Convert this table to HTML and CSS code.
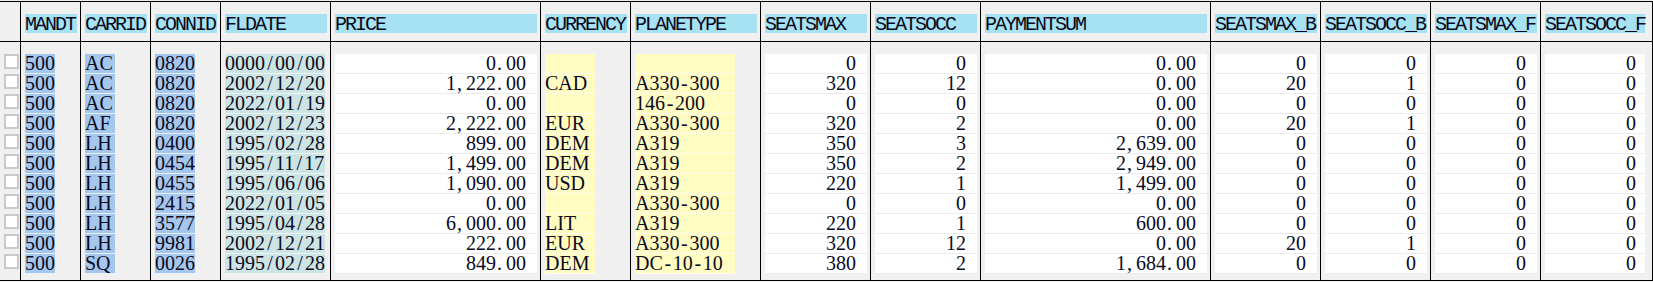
FILE: index.html
```html
<!DOCTYPE html>
<html>
<head>
<meta charset="utf-8">
<link rel="stylesheet" href="styles.css">
</head>
<body>
<div class="grid">
  <div class="col sel">
    <div class="hdr"></div>
    <div class="cells">
      <div class="chk"></div><div class="chk"></div><div class="chk"></div><div class="chk"></div><div class="chk"></div><div class="chk"></div><div class="chk"></div><div class="chk"></div><div class="chk"></div><div class="chk"></div><div class="chk"></div>
    </div>
  </div>
  <div class="col w60">
    <div class="hdr"><div class="label">MANDT</div></div>
    <div class="cells">
      <div class="v key c3">500</div><div class="v key c3">500</div><div class="v key c3">500</div><div class="v key c3">500</div><div class="v key c3">500</div><div class="v key c3">500</div><div class="v key c3">500</div><div class="v key c3">500</div><div class="v key c3">500</div><div class="v key c3">500</div><div class="v key c3">500</div>
    </div>
  </div>
  <div class="col w70">
    <div class="hdr"><div class="label">CARRID</div></div>
    <div class="cells">
      <div class="v key c3">AC</div><div class="v key c3">AC</div><div class="v key c3">AC</div><div class="v key c3">AF</div><div class="v key c3">LH</div><div class="v key c3">LH</div><div class="v key c3">LH</div><div class="v key c3">LH</div><div class="v key c3">LH</div><div class="v key c3">LH</div><div class="v key c3">SQ</div>
    </div>
  </div>
  <div class="col w70">
    <div class="hdr"><div class="label">CONNID</div></div>
    <div class="cells">
      <div class="v key c4">0820</div><div class="v key c4">0820</div><div class="v key c4">0820</div><div class="v key c4">0820</div><div class="v key c4">0400</div><div class="v key c4">0454</div><div class="v key c4">0455</div><div class="v key c4">2415</div><div class="v key c4">3577</div><div class="v key c4">9981</div><div class="v key c4">0026</div>
    </div>
  </div>
  <div class="col w110">
    <div class="hdr"><div class="label">FLDATE</div></div>
    <div class="cells">
      <div class="v date c10">0000<span class="s">/</span>00<span class="s">/</span>00</div>
      <div class="v date c10">2002<span class="s">/</span>12<span class="s">/</span>20</div>
      <div class="v date c10">2022<span class="s">/</span>01<span class="s">/</span>19</div>
      <div class="v date c10">2002<span class="s">/</span>12<span class="s">/</span>23</div>
      <div class="v date c10">1995<span class="s">/</span>02<span class="s">/</span>28</div>
      <div class="v date c10">1995<span class="s">/</span>11<span class="s">/</span>17</div>
      <div class="v date c10">1995<span class="s">/</span>06<span class="s">/</span>06</div>
      <div class="v date c10">2022<span class="s">/</span>01<span class="s">/</span>05</div>
      <div class="v date c10">1995<span class="s">/</span>04<span class="s">/</span>28</div>
      <div class="v date c10">2002<span class="s">/</span>12<span class="s">/</span>21</div>
      <div class="v date c10">1995<span class="s">/</span>02<span class="s">/</span>28</div>
    </div>
  </div>
  <div class="col w210">
    <div class="hdr"><div class="label">PRICE</div></div>
    <div class="cells">
      <div class="v num">0<span class="p">.</span>00</div>
      <div class="v num">1<span class="p">,</span>222<span class="p">.</span>00</div>
      <div class="v num">0<span class="p">.</span>00</div>
      <div class="v num">2<span class="p">,</span>222<span class="p">.</span>00</div>
      <div class="v num">899<span class="p">.</span>00</div>
      <div class="v num">1<span class="p">,</span>499<span class="p">.</span>00</div>
      <div class="v num">1<span class="p">,</span>090<span class="p">.</span>00</div>
      <div class="v num">0<span class="p">.</span>00</div>
      <div class="v num">6<span class="p">,</span>000<span class="p">.</span>00</div>
      <div class="v num">222<span class="p">.</span>00</div>
      <div class="v num">849<span class="p">.</span>00</div>
    </div>
  </div>
  <div class="col w90">
    <div class="hdr"><div class="label">CURRENCY</div></div>
    <div class="cells">
      <div class="v txt c5"></div><div class="v txt c5">CAD</div><div class="v txt c5"></div><div class="v txt c5">EUR</div><div class="v txt c5">DEM</div><div class="v txt c5">DEM</div><div class="v txt c5">USD</div><div class="v txt c5"></div><div class="v txt c5">LIT</div><div class="v txt c5">EUR</div><div class="v txt c5">DEM</div>
    </div>
  </div>
  <div class="col w130">
    <div class="hdr"><div class="label">PLANETYPE</div></div>
    <div class="cells">
      <div class="v txt c10"></div>
      <div class="v txt c10">A330<span class="s">-</span>300</div>
      <div class="v txt c10">146<span class="s">-</span>200</div>
      <div class="v txt c10">A330<span class="s">-</span>300</div>
      <div class="v txt c10">A319</div>
      <div class="v txt c10">A319</div>
      <div class="v txt c10">A319</div>
      <div class="v txt c10">A330<span class="s">-</span>300</div>
      <div class="v txt c10">A319</div>
      <div class="v txt c10">A330<span class="s">-</span>300</div>
      <div class="v txt c10">DC<span class="s">-</span>10<span class="s">-</span>10</div>
    </div>
  </div>
  <div class="col w110">
    <div class="hdr"><div class="label">SEATSMAX</div></div>
    <div class="cells">
      <div class="v num">0</div><div class="v num">320</div><div class="v num">0</div><div class="v num">320</div><div class="v num">350</div><div class="v num">350</div><div class="v num">220</div><div class="v num">0</div><div class="v num">220</div><div class="v num">320</div><div class="v num">380</div>
    </div>
  </div>
  <div class="col w110">
    <div class="hdr"><div class="label">SEATSOCC</div></div>
    <div class="cells">
      <div class="v num">0</div><div class="v num">12</div><div class="v num">0</div><div class="v num">2</div><div class="v num">3</div><div class="v num">2</div><div class="v num">1</div><div class="v num">0</div><div class="v num">1</div><div class="v num">12</div><div class="v num">2</div>
    </div>
  </div>
  <div class="col w230">
    <div class="hdr"><div class="label">PAYMENTSUM</div></div>
    <div class="cells">
      <div class="v num">0<span class="p">.</span>00</div>
      <div class="v num">0<span class="p">.</span>00</div>
      <div class="v num">0<span class="p">.</span>00</div>
      <div class="v num">0<span class="p">.</span>00</div>
      <div class="v num">2<span class="p">,</span>639<span class="p">.</span>00</div>
      <div class="v num">2<span class="p">,</span>949<span class="p">.</span>00</div>
      <div class="v num">1<span class="p">,</span>499<span class="p">.</span>00</div>
      <div class="v num">0<span class="p">.</span>00</div>
      <div class="v num">600<span class="p">.</span>00</div>
      <div class="v num">0<span class="p">.</span>00</div>
      <div class="v num">1<span class="p">,</span>684<span class="p">.</span>00</div>
    </div>
  </div>
  <div class="col w110">
    <div class="hdr"><div class="label">SEATSMAX_B</div></div>
    <div class="cells">
      <div class="v num">0</div><div class="v num">20</div><div class="v num">0</div><div class="v num">20</div><div class="v num">0</div><div class="v num">0</div><div class="v num">0</div><div class="v num">0</div><div class="v num">0</div><div class="v num">20</div><div class="v num">0</div>
    </div>
  </div>
  <div class="col w110">
    <div class="hdr"><div class="label">SEATSOCC_B</div></div>
    <div class="cells">
      <div class="v num">0</div><div class="v num">1</div><div class="v num">0</div><div class="v num">1</div><div class="v num">0</div><div class="v num">0</div><div class="v num">0</div><div class="v num">0</div><div class="v num">0</div><div class="v num">1</div><div class="v num">0</div>
    </div>
  </div>
  <div class="col w110">
    <div class="hdr"><div class="label">SEATSMAX_F</div></div>
    <div class="cells">
      <div class="v num">0</div><div class="v num">0</div><div class="v num">0</div><div class="v num">0</div><div class="v num">0</div><div class="v num">0</div><div class="v num">0</div><div class="v num">0</div><div class="v num">0</div><div class="v num">0</div><div class="v num">0</div>
    </div>
  </div>
  <div class="col last">
    <div class="hdr"><div class="label">SEATSOCC_F</div></div>
    <div class="cells">
      <div class="v num">0</div><div class="v num">0</div><div class="v num">0</div><div class="v num">0</div><div class="v num">0</div><div class="v num">0</div><div class="v num">0</div><div class="v num">0</div><div class="v num">0</div><div class="v num">0</div><div class="v num">0</div>
    </div>
  </div>
</div>
</body>
</html>
```

FILE: styles.css
```css
html, body {
  margin: 0;
  padding: 0;
  background: #f0f0f0;
}

body {
  padding-top: 1px;
  font-family: "Liberation Mono", "Courier New", monospace;
  font-size: 20px;
  letter-spacing: -2px;
  color: #0a0a1e;
}

.grid {
  display: flex;
  width: 1653px;
  border-top: 1px solid #000;
  border-bottom: 1px solid #000;
}

.col {
  flex: none;
  box-sizing: border-box;
  border-left: 1px solid #000;
}

.col.sel { width: 20px; border-left: none; }
.col.w60 { width: 60px; }
.col.w70 { width: 70px; }
.col.w90 { width: 90px; }
.col.w110 { width: 110px; }
.col.w130 { width: 130px; }
.col.w210 { width: 210px; }
.col.w230 { width: 230px; }
.col.last { width: 113px; border-right: 1px solid #000; }

.hdr {
  box-sizing: border-box;
  height: 40px;
  padding: 12px 3px 0 4px;
  border-bottom: 1px solid #000;
}

.last .hdr,
.last .cells { padding-right: 7px; }

.label {
  height: 19px;
  line-height: 22px;
  background: #a6e2f2;
  white-space: nowrap;
}

.cells {
  padding: 12px 3px 6px 4px;
}

.sel .cells { padding: 12px 0 6px 4px; }

.chk {
  box-sizing: border-box;
  width: 15px;
  height: 15px;
  margin-bottom: 5px;
  border: 2px solid #c9c9c9;
  background: #fff;
}

.v {
  height: 19px;
  line-height: 19px;
  white-space: pre;
  font-family: "Liberation Serif", "Times New Roman", serif;
  letter-spacing: 0;
  border-bottom: 1px solid #f6f6f6;
}

/* punctuation takes a full character cell, as in a fixed-pitch grid */
.p,
.s {
  display: inline-block;
  width: 10px;
}

.p { text-align: left; padding-left: 1px; box-sizing: border-box; }
.s { text-align: center; }

.c3 { width: 30px; }
.c4 { width: 40px; }
.c5 { width: 50px; }
.c10 { width: 100px; }

.key { background: #a5c7ee; border-bottom-color: #e8f0fa; }
.date { background: #cde4e4; border-bottom-color: #eef6f6; }
.txt { background: #fffcc2; border-bottom-color: #fffeee; }

.num {
  background: #fff;
  text-align: right;
  padding-right: 11px;
  border-bottom-color: #ebebeb;
}

.last .num { padding-right: 9px; }
```
